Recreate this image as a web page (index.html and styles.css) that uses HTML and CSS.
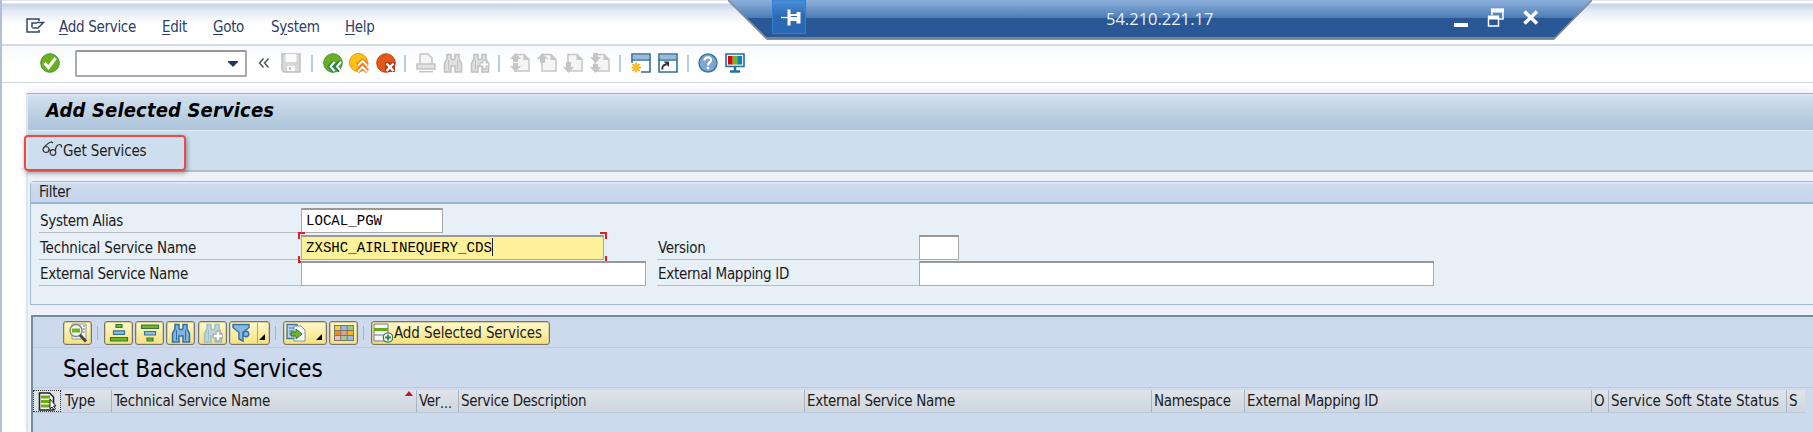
FILE: index.html
```html
<!DOCTYPE html>
<html lang="en">
<head>
<meta charset="utf-8">
<title>Add Selected Services</title>
<link rel="stylesheet" href="styles.css">
</head>
<body>
<svg width="0" height="0" class="defs">
  <defs>
    <symbol id="binoc" viewBox="0 0 20 20">
      <path d="M4 1.500h4v4l1 1h2l1-1v-4h4v4l2.500 5v8.500H12v-6H8v6H1.500v-8.500L4 5.500z" stroke-width="1.500"/>
      <path d="M5.500 7v10M14.500 7v10" stroke-width="1"/>
    </symbol>
    <symbol id="plus" viewBox="0 0 10 10">
      <path d="M3.500 1h3v2.500H9v3H6.500V9h-3V6.500H1v-3h2.500z"/>
    </symbol>
    <symbol id="page" viewBox="0 0 20 20">
      <path d="M5 1.500h9l5 5V18H5z" fill="#f5f5f5" stroke="#c6c6c6" stroke-width="1.500"/>
      <path d="M13.500 1v6h6z" fill="#c6c6c6"/>
    </symbol>
  </defs>
</svg>
<div class="window">
  <header class="menubar">
    <svg class="menu-icon" width="19" height="16" viewBox="0 0 19 16" fill="none" stroke="#33466f" stroke-width="1.500"><path d="M13 3V1H1v13h12v-2"/><path d="M6 9.500V5h5M11 4.500h6.500L12 10H6.500"/></svg>
    <span><u>A</u>dd Service</span><span><u>E</u>dit</span><span><u>G</u>oto</span><span>S<u>y</u>stem</span><span><u>H</u>elp</span>
  </header>

  <div class="toolbar">
    <svg width="20" height="20" viewBox="0 0 20 20"><circle cx="10" cy="10" r="9.300" fill="#6cb01c" stroke="#3d8f4a" stroke-width="1"/><path d="M4.500 10l4 4.500L15.500 5" fill="none" stroke="#fff" stroke-width="3"/></svg>
    <div class="command"><svg width="10" height="6" viewBox="0 0 10 6"><path d="M0 0h10v1L5 6 0 1z" fill="#1c3765"/></svg></div>
    <svg width="12" height="12" viewBox="0 0 12 12" fill="none" stroke="#555" stroke-width="1.500"><path d="M5.500 1.500L1.500 6l4 4.500M10.500 1.500L6.500 6l4 4.500"/></svg>
    <svg width="20" height="20" viewBox="0 0 20 20"><path d="M1 1h18v18H3l-2-2z" fill="#d8d8d8" stroke="#c0c0c0" stroke-width="1.500"/><path d="M4.500 1h11v8h-11zM6 13h8v5H6z" fill="#fafafa"/><path d="M8 14h2v3H8z" fill="#c0c0c0"/></svg>
    <i class="sep"></i>
    <svg width="20" height="20" viewBox="0 0 20 20"><circle cx="10" cy="10" r="9.300" fill="#6cb01c" stroke="#3d8f4a"/><path d="M11 9L7 13.500l4 4.500M17 9l-4 4.500 4 4.500" fill="none" stroke="#2f8250" stroke-width="4.500"/><path d="M11.500 9L7.500 13.500l4 4.500M18 9l-4 4.500 4 4.500" fill="none" stroke="#fff" stroke-width="2"/></svg>
    <svg width="20" height="20" viewBox="0 0 20 20"><circle cx="9.500" cy="9.500" r="9" fill="#ffc20e" stroke="#f08a18"/><path d="M8.500 12.500L13.500 8l5 4.500M8.500 18.500l5-4.500 5 4.500" fill="none" stroke="#ee7a1a" stroke-width="4.500"/><path d="M9 12.500L13.500 8l4.500 4.500M9 18.500l4.500-4.500 4.500 4.500" fill="none" stroke="#fff" stroke-width="2"/></svg>
    <svg width="20" height="20" viewBox="0 0 20 20"><circle cx="10" cy="10" r="9.300" fill="#e2581a" stroke="#c74412"/><path d="M9 9h10v10H9z" fill="#b83a18"/><path d="M10.500 10.500l7 7.500M17.500 10.500l-7 7.500" stroke="#fff" stroke-width="2.500"/></svg>
    <i class="sep"></i>
    <svg width="20" height="20" viewBox="0 0 20 20" fill="#f4f4f4" stroke="#c4c4c4" stroke-width="1.500"><path d="M4 11V1h8l4 4v6"/><path d="M1 11h18v5H1z" fill="#e2e2e2"/><path d="M3 18.700h14"/></svg>
    <svg width="20" height="20" fill="#e0e0e0" stroke="#c0c0c0"><use href="#binoc"/></svg>
    <svg width="20" height="20" fill="#e0e0e0" stroke="#c0c0c0"><use href="#binoc"/><use href="#plus" x="9" y="6" width="11" height="11" fill="#fff"/></svg>
    <i class="sep"></i>
    <svg width="20" height="20"><use href="#page"/><path d="M5.500 0L11 6H8v7h3l-5.500 6L0 13h3V6H0z" fill="#c6c6c6"/><path d="M1 9.500h9" stroke="#f6f6f6"/></svg>
    <svg width="20" height="20"><use href="#page"/><path d="M5.500 0L11 6H8v4H3V6H0z" fill="#c6c6c6"/></svg>
    <svg width="20" height="20"><use href="#page"/><path d="M5.500 20L11 14H8V9H3v5H0z" fill="#c6c6c6"/></svg>
    <svg width="20" height="20"><use href="#page"/><path d="M3 0h5v4h3l-5.500 6L0 4h3zM5.500 20L11 14H8v-3H3v3H0z" fill="#c6c6c6"/></svg>
    <i class="sep"></i>
    <svg width="20" height="20" viewBox="0 0 20 20"><path d="M1 1h18v18H1z" fill="#fff" stroke="#2d7198" stroke-width="1.600"/><path d="M2 2h16v4H2z" fill="#9bb9dc"/><path d="M1 7h18" stroke="#2d7198" stroke-width="1.500"/><path d="M0 10h10v10H0z" fill="#fff"/><path d="M5 9.500v10M.5 14.500h9.500M1.500 11l7 7M8.500 11l-7 7" stroke="#f59c12" stroke-width="1.500"/><circle cx="5" cy="14.500" r="3.200" fill="#ffc010"/></svg>
    <svg width="20" height="20" viewBox="0 0 20 20"><path d="M1 1h18v18H1z" fill="#fff" stroke="#2d7198" stroke-width="1.600"/><path d="M2 2h16v4H2z" fill="#9bb9dc"/><path d="M1 7h18" stroke="#2d7198" stroke-width="1.500"/><path d="M4.500 16.500Q3.500 12 8.500 11.500" fill="none" stroke="#333" stroke-width="2"/><path d="M5.500 8.500H11V14z" fill="#333"/></svg>
    <i class="sep"></i>
    <svg width="20" height="20" viewBox="0 0 20 20"><circle cx="10" cy="10" r="9" fill="#7fa5d0" stroke="#397ba3" stroke-width="1.500"/><path d="M6.500 7.500c0-4.500 7-4 6.500 0-.2 2-3 2-3 5" fill="none" stroke="#fff" stroke-width="2.300"/><path d="M8.800 14h2.400v2.200H8.800z" fill="#fff"/></svg>
    <svg width="20" height="20" viewBox="0 0 20 20"><path d="M1 1h18v12.500H1z" fill="#e4f1fa" stroke="#24719b" stroke-width="1.600"/><path d="M3 3h4.700v8.500H3z" fill="#d40c0c"/><path d="M7.700 3h4.600v8.500H7.700z" fill="#77b51b"/><path d="M12.300 3H17v8.500h-4.700z" fill="#0d7dcc"/><path d="M10 14v4M5 18.500h10" stroke="#24719b" stroke-width="2.500"/></svg>
  </div>

  <main class="screen">
    <h1 class="title">Add Selected Services</h1>
    <div class="appbar">
      <div class="get-services"><svg width="21" height="16" viewBox="0 0 21 16" fill="none" stroke="#333" stroke-width="1.200"><circle cx="4" cy="8.500" r="3"/><circle cx="11" cy="11.500" r="2.800"/><path d="M1.500 7Q6 1.500 9.500 1l1.500 1M7 8.500l2 1.500M13.500 10Q13.500 3.500 18 3.500q2 .5 1.500 3"/></svg><span>Get Services</span></div>
    </div>

    <section class="filter">
      <h2>Filter</h2>
      <div class="fields">
        <label class="label">System Alias</label><div class="input alias">LOCAL_PGW</div><i></i><i></i>
        <label class="label wide">Technical Service Name</label><div class="input tech"><b class="corner tl"></b><b class="corner tr"></b><b class="corner bl"></b><b class="corner br"></b>ZXSHC_AIRLINEQUERY_CDS<em class="caret"></em></div><label class="label">Version</label><div class="input version"></div>
        <label class="label">External Service Name</label><div class="input ext"></div><label class="label">External Mapping ID</label><div class="input mapping"></div>
      </div>
    </section>

    <section class="grid">
      <div class="gridbar">
        <div class="btn"><svg width="20" height="20" viewBox="0 0 20 20"><path d="M4 1h14v15H4z" fill="#f4f4f4" stroke="#8b9eb0"/><path d="M15 3h2M15 6h2M15 9h2" stroke="#778"/><circle cx="8" cy="7.500" r="6" fill="#eef7ee" stroke="#888" stroke-width="1.500"/><path d="M4 5.500h8v4H4z" fill="#6fb52c"/><path d="M12 12l6 6.500" stroke="#444" stroke-width="3"/></svg></div>
        <i class="gsep"></i>
        <div class="btn"><svg width="20" height="20" viewBox="0 0 20 20" stroke-width="1.200"><path d="M7 1.500h6v3H7zM1.500 14.500h17V18h-17z" fill="#6fb52c" stroke="#35783f"/><path d="M4.500 7.800h11v3.500h-11z" fill="#8fbbe0" stroke="#35759c"/></svg></div>
        <div class="btn"><svg width="20" height="20" viewBox="0 0 20 20" stroke-width="1.200"><path d="M1.500 2h17v3.500h-17zM7 15h6v3H7z" fill="#6fb52c" stroke="#35783f"/><path d="M4.500 8.500h11V12h-11z" fill="#8fbbe0" stroke="#35759c"/></svg></div>
        <div class="btn"><svg width="20" height="20" fill="#82b3df" stroke="#2e6fa5"><use href="#binoc"/></svg></div>
        <div class="btn"><svg width="20" height="20" fill="#bcd5dd" stroke="#9fbfc6"><use href="#binoc"/><use href="#plus" x="9" y="7" width="12" height="12" fill="#fff" stroke="#aaa"/></svg></div>
        <div class="btn split"><svg width="20" height="20" viewBox="0 0 20 20" fill="#8ab7e2" stroke="#2e71a7" stroke-width="1.400"><path d="M1 1.500h16v3l-6 5v8.500l-4-2V9.500l-6-5z"/><circle cx="14" cy="11" r="2.700"/></svg><svg class="tri" width="6" height="6"><path d="M6 0v6H0z"/></svg></div>
        <i class="gsep"></i>
        <div class="btn menu"><svg width="20" height="20" viewBox="0 0 20 20"><path d="M1 1.500h10v14H1z" fill="#b8d3ec" stroke="#3c7aa5" stroke-width="1.400"/><path d="M3 5h5M3 8h4M3 11h2" stroke="#3c7aa5"/><path d="M8 3h7l4 4v11H8z" fill="#fafafa" stroke="#7e939d"/><path d="M5 9h5V6l6 5-6 5v-3H5z" fill="#6fb52c" stroke="#35783f"/></svg><svg class="tri" width="6" height="6"><path d="M6 0v6H0z"/></svg></div>
        <div class="btn"><svg width="20" height="16" viewBox="0 0 20 16"><path d="M0 0h20v16H0z" fill="#777"/><path d="M1 1h5.300v4H1z" fill="#f6cf45"/><path d="M7.300 1h5.300v4H7.300z" fill="#9ab9e6"/><path d="M13.600 1H19v4h-5.400z" fill="#9cc978"/><path d="M1 6h5.300v4H1z" fill="#f28c1d"/><path d="M7.300 6h5.300v4H7.300z" fill="#e3a093"/><path d="M13.600 6H19v4h-5.400z" fill="#f0b91a"/><path d="M1 11h5.300v4H1z" fill="#efb6c6"/><path d="M7.300 11h5.300v4H7.300z" fill="#a8cd89"/><path d="M13.600 11H19v4h-5.400z" fill="#9ab9e6"/></svg></div>
        <i class="gsep"></i>
        <div class="btn add"><svg width="20" height="20" viewBox="0 0 20 20"><path d="M1 1h14v17H1z" fill="#f7f7f7" stroke="#778"/><path d="M1 5h14v3H1z" fill="#65ac1d"/><path d="M1 12h14" stroke="#778"/><circle cx="15" cy="14.500" r="4.700" fill="#fff" stroke="#328150" stroke-width="1.300"/><path d="M15 11.500v6M12 14.500h6" stroke="#328150" stroke-width="1.800"/></svg><span>Add Selected Services</span></div>
      </div>
      <h2 class="grid-title">Select Backend Services</h2>
      <div class="columns">
        <div class="selectall"><svg width="19" height="19" viewBox="0 0 19 19"><path d="M1.500 1h10l4 4v13h-14z" fill="#fafafa" stroke="#222" stroke-width="1.600"/><path d="M3 5h9M3 9.500h9M3 14h9" stroke="#69ac12" stroke-width="2.800"/><path d="M12 7v10l2-2 2 3 1.500-1-2-3H18z" fill="#fff" stroke="#222"/></svg></div>
        <span class="wide">Type</span><span class="wide">Technical Service Name<svg class="sort" width="8" height="5"><path d="M4 0l4 5H0z" fill="#c8102e"/></svg></span><span>Ver<small>...</small></span><span>Service Description</span><span>External Service Name</span><span>Namespace</span><span>External Mapping ID</span><span>O</span><span class="state">Service Soft State Status</span><span>S</span>
      </div>
    </section>
  </main>
</div>

<div class="rdp">
  <svg width="864" height="40" viewBox="0 0 864 40">
    <defs><linearGradient id="bar" x2="0" y2="1"><stop offset="0" stop-color="#8caedb"/><stop offset=".08" stop-color="#83a8d6"/><stop offset=".45" stop-color="#4a7db5"/><stop offset=".45" stop-color="#2a5794"/><stop offset="1" stop-color="#295998"/></linearGradient>
    <linearGradient id="pin" x2="0" y2="1"><stop offset="0" stop-color="#4c90dc"/><stop offset=".5" stop-color="#2b69b2"/><stop offset="1" stop-color="#2a68b4"/></linearGradient></defs>
    <path d="M0 0h864l-38.500 39.500H39z" fill="url(#bar)"/>
    <path d="M39 37.500h788" stroke="#5b8cc9"/>
    <path d="M0 0l39 39h787l38-39" fill="none" stroke="#858b93" stroke-width="1.600"/>
    <path d="M44.500 0h33v33.500h-33z" fill="url(#pin)" stroke="#347fd0"/>
    <path d="M53 17.500h8" stroke="#fff" stroke-width="1.300"/><path d="M59.500 9.500h3V14h6v-2h4v11.500h-4V21h-6v4.500h-3z" fill="#fff"/><path d="M63 16h6v1h-6z" fill="#2b69b2"/>
    <path d="M726 23h14v4h-14z" fill="#fff"/>
    <path d="M764 15v-5.500h11V19h-5" fill="none" stroke="#fff" stroke-width="1.500"/><path d="M763 8.500h13v4h-13z" fill="#fff"/>
    <path d="M760.500 17h10v9h-10z" fill="#2a5794" stroke="#fff" stroke-width="1.500"/><path d="M760 15.500h11v4h-11z" fill="#fff"/>
    <path d="M796.500 11.500l12.500 12M809 11.500l-12.500 12" stroke="#fff" stroke-width="3.600"/>
  </svg>
  <span>54.210.221.17</span>
</div>
</body>
</html>
```
FILE: styles.css
```css
* { box-sizing: border-box; }
body {
  margin: 0;
  width: 1813px;
  height: 432px;
  position: relative;
  overflow: hidden;
  background: #fff;
  color: #1c1c1c;
  font: 15px/20px "DejaVu Sans Condensed", "DejaVu Sans", sans-serif;
  letter-spacing: -0.3px;
  white-space: nowrap;
}
h1, h2 { margin: 0; font-weight: normal; }
svg { display: block; flex: none; }
.defs { position: absolute; }
.wide { letter-spacing: -0.17px; }

.window { height: 432px; border-left: 2px solid #b3bfd3; }

.menubar {
  height: 46px;
  border-bottom: 2px solid #d5dbe2;
  background: linear-gradient(#dfe5f5 0, #dfe5f5 1px, #fff 1px, #fff 3px, #c9d4ea 4px, #e7ecf6 12px, #fff 24px);
  display: grid;
  grid-template-columns: 33px 103px 51px 58px 74px 60px;
  align-items: center;
  padding: 10px 0 0 24px;
  color: #2b4069;
}
.menubar u { text-underline-offset: 2px; }
.menu-icon { margin-top: -3px; }

.toolbar {
  height: 37px;
  border-bottom: 1px solid #cfd6dc;
  background: linear-gradient(#f7f9fe, #fff 17px);
  display: grid;
  grid-template-columns: 35px 183px 23px 30px 12px 26px 27px 28px 12px 27px 27px 28px 12px 27px 26px 27px 29px 12px 27px 29px 11px 27px 27px;
  align-items: center;
  padding: 0 0 3px 38px;
}
.sep { width: 2px; height: 17px; background: #b6cde9; margin-bottom: -2px; }
.command {
  width: 172px;
  height: 27px;
  border: 2px solid #aaa;
  border-top-color: #999;
  border-radius: 2px;
  background: #fff;
  display: flex;
  align-items: center;
  justify-content: flex-end;
  padding-right: 7px;
  margin-top: 2px;
}

.screen {
  margin-left: 24px;
  margin-top: 10px;
  height: 339px;
  border-left: 2px solid #dde5ef;
  border-top: 1px solid #a5afca;
  background: #eef2f8;
  box-shadow: 0 -4px 5px #f1f1fb;
}
.title {
  height: 37px;
  border-top: 2px solid #dde3f2;
  border-bottom: 1px solid #e1ebf3;
  background: linear-gradient(#d1dff0, #b9cfdf 60%, #adc4df);
  padding: 3px 0 0 18px;
  font: italic bold 20px/22px "DejaVu Sans Condensed", "DejaVu Sans", sans-serif;
  letter-spacing: .15px;
  color: #000;
}
.appbar {
  height: 41px;
  border-bottom: 2px solid #afbfce;
  background: #cddfee;
}
.get-services {
  position: relative;
  width: 162px;
  height: 36px;
  left: -4px;
  top: 4px;
  border: 2px solid #e64c45;
  border-radius: 4px;
  box-shadow: 1px 2px 5px #0006;
  padding: 4px 0 0 16px;
  display: flex;
  letter-spacing: -.15px;
}

.filter {
  margin: 9px 0 0 2px;
  height: 124px;
  border: 1px solid #9cb9dc;
  border-right: 0;
  border-radius: 4px 0 0 0;
  background: #e7eff7;
}
.filter h2 {
  height: 22px;
  border-bottom: 2px solid #9ab5d9;
  background: linear-gradient(#e0eafa 0, #e0eafa 1px, #cbdcee 2px, #c5d6ee);
  padding-left: 8px;
  font-size: 15px;
  line-height: 20px;
}
.fields {
  padding: 4px 0 0 8px;
  display: grid;
  grid-template-columns: 262px 356px 262px 520px;
  grid-auto-rows: 24px;
  row-gap: 2.700px;
}
.label {
  height: 25px;
  border-bottom: 1px solid #b9bcc4;
  padding: 3px 0 0 1px;
}
.input {
  position: relative;
  height: 25px;
  border: 1px solid #aaa;
  border-top: 2px solid #999;
  background: #fff;
  padding: 1px 0 0 4px;
  font: 14.080px/20px "Liberation Mono", monospace;
  letter-spacing: 0;
  color: #000;
}
.alias { width: 142px; }
.tech { width: 303px; background: #fff09a; }
.ext { width: 345px; }
.version { width: 40px; }
.mapping { width: 515px; }
.caret { position: absolute; left: 190px; top: 1px; width: 1px; height: 18px; background: #123; }
.corner { position: absolute; width: 7px; height: 7px; border: 0 solid #e02020; }
.tl { left: -4px; top: -5px; border-width: 2px 0 0 2px; }
.tr { right: -4px; top: -5px; border-width: 2px 2px 0 0; }
.bl { left: -4px; bottom: -4px; border-width: 0 0 2px 2px; }
.br { right: -4px; bottom: -4px; border-width: 0 2px 2px 0; }

.grid {
  margin: 10px 0 0 3px;
  height: 118px;
  border-top: 2px solid #758b9f;
  border-left: 2px solid #758b9f;
  background: #cddaed;
}
.gridbar {
  height: 31px;
  border-bottom: 1px solid #bfcbdc;
  display: grid;
  grid-template-columns: 34px 7px 31px 31px 32px 31px 46px 8px 46px 34px 8px 180px;
  padding: 4px 0 0 30px;
}
.btn {
  position: relative;
  width: 29px;
  height: 24px;
  border: 1px solid #77756a;
  border-radius: 3px;
  background: linear-gradient(#fff9cf, #f6e27d);
  box-shadow: inset 0 0 0 1px #d9ce94;
  display: flex;
  align-items: center;
  padding-left: 4px;
}
.split { width: 41px; padding-left: 2px; background: linear-gradient(90deg, #0000 27px, #aaa27b 27px, #aaa27b 28px, #0000 28px), linear-gradient(#fff9cf, #f6e27d); }
.menu { width: 44px; padding-left: 2px; }
.tri { position: absolute; right: 4px; bottom: 4px; }
.add { width: 179px; padding-left: 1px; letter-spacing: -.1px; color: #222; }
.add span { margin-left: 1px; }
.gsep { width: 1px; height: 14px; margin-top: 5px; background: #adb0b4; }
.grid-title {
  height: 40px;
  border-bottom: 1px solid #bfcbdb;
  padding: 8px 0 0 30px;
  font-size: 24px;
  line-height: 26px;
  letter-spacing: -.18px;
  color: #000;
}
.columns {
  height: 25px;
  width: 1772px;
  border-bottom: 1px solid #bac9dc;
  display: grid;
  grid-template-columns: 30px 49px 305px 42px 346px 347px 93px 347px 17px 178px 18px;
  padding-top: 2px;
}
.columns span {
  position: relative;
  background: linear-gradient(#dfe4eb, #cfd6dd);
  border-right: 1px solid #a4b5c4;
  padding-left: 2px;
  line-height: 22px;
}
.columns span:last-child { border: 0; }
.columns small { font-size: 14px; position: relative; top: 2px; letter-spacing: 0; }
.columns .state { letter-spacing: 0; }
.sort { position: absolute; right: 3px; top: 1px; }
.selectall { width: 28px; border: 1px dotted #333; background: #dfe4e8; display: flex; align-items: center; padding-left: 4px; }

.rdp { position: absolute; left: 728px; top: 0; width: 864px; height: 40px; }
.rdp span {
  position: absolute;
  left: 378px;
  top: 8px;
  color: #e9eff8;
  font: 16.500px/22px "Open Sans", "Noto Sans", sans-serif;
  letter-spacing: 0;
}
```
